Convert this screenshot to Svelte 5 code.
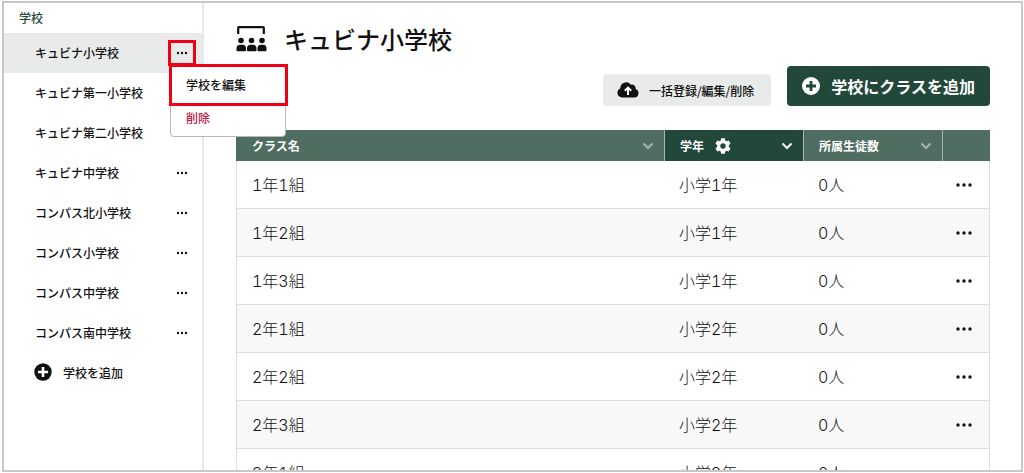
<script>
	let schools = [
		{ name: 'キュビナ小学校', active: true },
		{ name: 'キュビナ第一小学校' },
		{ name: 'キュビナ第二小学校' },
		{ name: 'キュビナ中学校' },
		{ name: 'コンパス北小学校' },
		{ name: 'コンパス小学校' },
		{ name: 'コンパス中学校' },
		{ name: 'コンパス南中学校' }
	];

	let classes = [
		{ name: '1年1組', grade: '小学1年', count: 0 },
		{ name: '1年2組', grade: '小学1年', count: 0 },
		{ name: '1年3組', grade: '小学1年', count: 0 },
		{ name: '2年1組', grade: '小学2年', count: 0 },
		{ name: '2年2組', grade: '小学2年', count: 0 },
		{ name: '2年3組', grade: '小学2年', count: 0 },
		{ name: '3年1組', grade: '小学3年', count: 0 }
	];

	let menuOpen = true;

	function ToggleMenu(school)
	{
		if (school.active) menuOpen = !menuOpen;
	}
</script>

<div class="frame">
	<nav class="sidebar">
		<h2 class="sidebar-title">学校</h2>
		<ul class="school-list">
			{#each schools as school}
				<li class="school" class:active={school.active}>
					<a class="school-name" href="#school">{school.name}</a>
					<button class="school-more" class:marked={school.active} aria-label="メニュー" on:click={() => ToggleMenu(school)}>
						<svg width="12" height="4" viewBox="0 0 12 4"><circle cx="2" cy="2" r="1.2" /><circle cx="6" cy="2" r="1.2" /><circle cx="10" cy="2" r="1.2" /></svg>
					</button>
					{#if school.active && menuOpen}
						<div class="menu">
							<button class="menu-item menu-edit">学校を編集</button>
							<button class="menu-item menu-delete">削除</button>
						</div>
					{/if}
				</li>
			{/each}
		</ul>
		<button class="add-school">
			<svg width="18" height="18" viewBox="0 0 18 18"><circle cx="9" cy="9" r="8.7" /><path d="M9 3.9v10.2M3.9 9h10.2" stroke="#fff" stroke-width="2.6" /></svg>
			学校を追加
		</button>
	</nav>

	<main class="main">
		<header class="page-title">
			<svg width="32" height="26" viewBox="0 0 32 26">
				<path d="M2.2 8V1.8Q2.200 1.200 2.800 1.200H27.200Q27.800 1.200 27.800 1.800V8" fill="none" stroke="#111" stroke-width="2.200" />
				<circle cx="5" cy="14.500" r="2.800" /><circle cx="15.500" cy="14.500" r="2.800" /><circle cx="26" cy="14.500" r="2.800" />
				<path d="M.5 24.500v-2Q.5 18.800 4 18.800h2.500Q10 18.800 10 22.500v2q0 .8-.8.8H1.300q-.8 0-.8-.8zM11 24.500v-2Q11 18.800 14.500 18.800H17Q20.500 18.800 20.500 22.500v2q0 .8-.8.8H11.800q-.8 0-.8-.8zM21.500 24.500v-2Q21.500 18.800 25 18.800h2Q30.500 18.800 30.500 22.500v2q0 .8-.8.8H22.300q-.8 0-.8-.8z" />
			</svg>
			<h1>キュビナ小学校</h1>
		</header>

		<div class="actions">
			<button class="btn-bulk">
				<svg width="22" height="16" viewBox="0 0 22 16">
					<path d="M5 15.500A4.800 4.800 0 0 1 3.300 6.300 5.800 5.800 0 0 1 13.800 2.800 3.700 3.700 0 0 1 18.600 7 4.400 4.400 0 0 1 17.600 15.500z" />
					<path d="M11 13V6M7.800 8.800 11 5.600l3.200 3.200" fill="none" stroke="#fff" stroke-width="2" />
				</svg>
				一括登録/編集/削除
			</button>
			<button class="btn-add">
				<svg width="18" height="18" viewBox="0 0 18 18"><circle cx="9" cy="9" r="9" fill="#fff" /><path d="M9 4v10M4 9h10" stroke="#22483a" stroke-width="2.800" /></svg>
				学校にクラスを追加
			</button>
		</div>

		<table class="classes">
			<thead>
				<tr>
					<th class="col-name">
						<div class="th-inner">
							クラス名
							<svg class="chevron" width="12" height="8" viewBox="0 0 12 8"><path d="M1.500 1.500 6 6l4.500-4.500" /></svg>
						</div>
					</th>
					<th class="col-grade sorted">
						<div class="th-inner">
							学年
							<svg class="gear" width="16" height="16" viewBox="0 0 16 16">
								<path fill-rule="evenodd" d="M6.200.3h3.600l.5 2.200 1.200.7 2.200-.7 1.800 3.100-1.700 1.600v1.600l1.700 1.600-1.800 3.100-2.200-.7-1.200.7-.5 2.200H6.200l-.5-2.200-1.200-.7-2.200.7-1.800-3.100 1.700-1.600V7.200L.5 5.600l1.800-3.100 2.200.7 1.200-.7zM8 5.300a2.700 2.700 0 1 0 0 5.400 2.700 2.700 0 0 0 0-5.400z" />
							</svg>
							<svg class="chevron" width="12" height="8" viewBox="0 0 12 8"><path d="M1.500 1.500 6 6l4.500-4.500" /></svg>
						</div>
					</th>
					<th class="col-count">
						<div class="th-inner">
							所属生徒数
							<svg class="chevron" width="12" height="8" viewBox="0 0 12 8"><path d="M1.500 1.500 6 6l4.500-4.500" /></svg>
						</div>
					</th>
					<th class="col-more"></th>
				</tr>
			</thead>
			<tbody>
				{#each classes as row}
					<tr>
						<td>{row.name}</td>
						<td>{row.grade}</td>
						<td>{row.count}人</td>
						<td class="cell-more">
							<button class="row-more" aria-label="メニュー">
								<svg width="16" height="4" viewBox="0 0 16 4"><circle cx="2" cy="2" r="1.700" /><circle cx="8" cy="2" r="1.700" /><circle cx="14" cy="2" r="1.700" /></svg>
							</button>
						</td>
					</tr>
				{/each}
			</tbody>
		</table>
	</main>
</div>

<style>
	:global(body) {
		background: #fff;
	}

	.frame {
		display: flex;
		box-sizing: border-box;
		height: calc(100vh - 2px);
		margin: 1px 1px 0 2px;
		border: 2px solid #c8c8c8;
		overflow: hidden;

		font-family: "Noto Sans CJK JP", sans-serif;
		font-size: 12px;
		font-weight: 500;
		color: #111;
	}

	button {
		margin: 0;
		padding: 0;
		border: none;
		background: none;
		font: inherit;
		color: inherit;
		cursor: pointer;
	}

	svg {
		display: block;
		flex: none;
		fill: #111;
	}

	.sidebar {
		flex: none;
		width: 198px;
		border-right: 2px solid #e8e8e8;
	}

	.sidebar-title {
		margin: 0;
		padding-left: 15px;
		font-size: 12px;
		font-weight: 500;
		line-height: 30px;
		color: #22483a;
	}

	.school-list {
		margin: 0;
		padding: 0;
		list-style: none;
	}

	.school {
		position: relative;
		display: flex;
		align-items: center;
		justify-content: space-between;
		height: 40px;
		padding: 0 6px 0 31px;
	}

	.school.active {
		background: #e9ebea;
	}

	.school-name {
		padding-bottom: 2px;
		color: inherit;
		text-decoration: none;
	}

	.school-more {
		display: flex;
		align-items: center;
		justify-content: center;
		box-sizing: border-box;
		width: 28px;
		height: 26px;
	}

	.school-more.marked {
		border: 3px solid #f00014;
	}

	.menu {
		position: absolute;
		z-index: 1;
		top: 32px;
		left: 166px;
		box-sizing: border-box;
		width: 116px;
		border: 1px solid #b4bab7;
		border-radius: 4px;
		background: #fff;
	}

	.menu-item {
		display: block;
		box-sizing: border-box;
		text-align: left;
		white-space: nowrap;
	}

	.menu-edit {
		width: 119px;
		height: 42px;
		margin: -2px;
		padding: 0 14px 2px;
		border: 3px solid #f00014;
	}

	.menu-delete {
		width: 100%;
		height: 32px;
		padding: 0 15px 6px;
		color: #c0203c;
	}

	.add-school {
		display: flex;
		align-items: center;
		gap: 11px;
		height: 38px;
		padding-left: 30px;
	}

	.main {
		flex: 1;
		padding: 17px 31px 0 32px;
	}

	.page-title {
		display: flex;
		align-items: center;
		gap: 16px;
	}

	.page-title h1 {
		margin: 0;
		font-size: 24px;
		font-weight: 500;
		line-height: 38px;
	}

	.actions {
		display: flex;
		align-items: flex-end;
		justify-content: flex-end;
		gap: 16px;
		margin: 8px 0 24px;
	}

	.btn-bulk {
		display: flex;
		align-items: center;
		gap: 10px;
		height: 32px;
		padding: 0 17px 0 14px;
		border-radius: 4px;
		background: #e9ebea;
	}

	.btn-add {
		display: flex;
		align-items: center;
		gap: 11px;
		height: 40px;
		padding: 0 15px;
		border-radius: 4px;
		background: #22483a;
		font-size: 16px;
		font-weight: 700;
		color: #fff;
	}

	.classes {
		width: 100%;
		table-layout: fixed;
		border-collapse: separate;
		border-spacing: 0;
		box-shadow: inset 1px 0 #dcdfde, inset -1px 0 #dcdfde;
	}

	th {
		height: 31px;
		padding: 0;
		background: #4f6d61;
		font-size: 12px;
		font-weight: 700;
		text-align: left;
		color: #fff;
	}

	th + th {
		border-left: 1px solid #a7b6b0;
	}

	th.sorted {
		background: #22483a;
	}

	.th-inner {
		display: flex;
		align-items: center;
		gap: 11px;
		padding: 0 10px 0 15px;
	}

	.th-inner,
	td {
		line-height: 18px;
	}

	.col-name .th-inner {
		padding-left: 16px;
	}

	.col-grade,
	.col-count {
		width: 138px;
	}

	.col-more {
		width: 47px;
	}

	.gear {
		fill: #fff;
	}

	.chevron {
		margin-left: auto;
		fill: none;
		stroke: #a7b6b0;
		stroke-width: 2;
	}

	.sorted .chevron {
		stroke: #fff;
	}

	td {
		box-sizing: border-box;
		height: 48px;
		padding: 0 15px;
		border-bottom: 1px solid #dcdfde;
		font-family: Inter, "Noto Sans CJK JP", sans-serif;
		font-size: 16px;
		font-weight: 300;
		font-variant-numeric: tabular-nums;
	}

	td:first-child {
		padding-left: 16px;
	}

	tbody tr:nth-child(even) td {
		background: #f8f8f8;
	}

	td:first-child {
		border-left: 1px solid #dcdfde;
		padding-left: 15px;
	}

	td.cell-more {
		padding: 0;
		border-right: 1px solid #dcdfde;
	}

	.row-more {
		display: flex;
		align-items: center;
		justify-content: center;
		width: 44px;
		height: 32px;
	}
</style>
